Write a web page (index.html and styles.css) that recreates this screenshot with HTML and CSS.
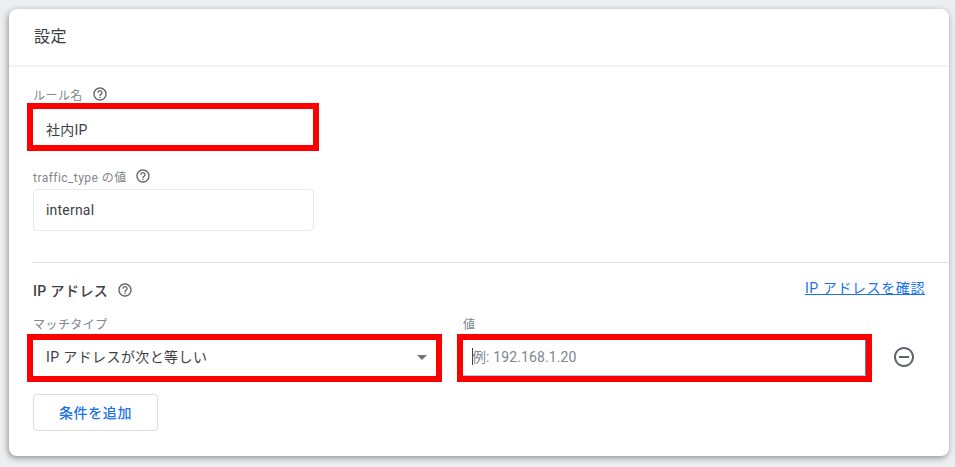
FILE: index.html
```html
<!DOCTYPE html>
<html lang="ja">
<head>
    <meta charset="UTF-8">
    <meta name="viewport" content="width=device-width, initial-scale=1.0">
    <title>設定</title>
    <link rel="stylesheet" href="styles.css">
</head>
<body>
    <div class="card">
        <div class="card-header">設定</div>

        <div class="section-top">
            <div class="label label-first">ルール名
                <svg class="help" viewBox="0 0 24 24"><path d="M11 18h2v-2h-2v2zm1-16C6.48 2 2 6.48 2 12s4.48 10 10 10 10-4.48 10-10S17.52 2 12 2zm0 18c-4.41 0-8-3.59-8-8s3.59-8 8-8 8 3.59 8 8-3.59 8-8 8zm0-14c-2.21 0-4 1.79-4 4h2c0-1.1.9-2 2-2s2 .9 2 2c0 2-3 1.75-3 5h2c0-2.25 3-2.5 3-5 0-2.21-1.79-4-4-4z"/></svg>
            </div>
            <div class="input input-name marked">社内IP</div>

            <div class="label label-second">traffic_type の値
                <svg class="help" viewBox="0 0 24 24"><path d="M11 18h2v-2h-2v2zm1-16C6.48 2 2 6.48 2 12s4.48 10 10 10 10-4.48 10-10S17.52 2 12 2zm0 18c-4.41 0-8-3.59-8-8s3.59-8 8-8 8 3.59 8 8-3.59 8-8 8zm0-14c-2.21 0-4 1.79-4 4h2c0-1.1.9-2 2-2s2 .9 2 2c0 2-3 1.75-3 5h2c0-2.25 3-2.5 3-5 0-2.21-1.79-4-4-4z"/></svg>
            </div>
            <div class="input input-type">internal</div>
        </div>

        <div class="section-ip">
            <div class="ip-title-row">
                <div class="ip-title">IP アドレス
                    <svg class="help" viewBox="0 0 24 24"><path d="M11 18h2v-2h-2v2zm1-16C6.48 2 2 6.48 2 12s4.48 10 10 10 10-4.48 10-10S17.52 2 12 2zm0 18c-4.41 0-8-3.59-8-8s3.59-8 8-8 8 3.59 8 8-3.59 8-8 8zm0-14c-2.21 0-4 1.79-4 4h2c0-1.1.9-2 2-2s2 .9 2 2c0 2-3 1.75-3 5h2c0-2.25 3-2.5 3-5 0-2.21-1.79-4-4-4z"/></svg>
                </div>
                <a href="#" class="link">IP アドレスを確認</a>
            </div>

            <div class="condition-row">
                <div class="field">
                    <div class="label">マッチタイプ</div>
                    <div class="input input-select marked">
                        IP アドレスが次と等しい
                        <span class="arrow"></span>
                    </div>
                </div>
                <div class="field">
                    <div class="label">値</div>
                    <div class="input input-value marked"><span class="caret"></span>例: 192.168.1.20</div>
                </div>
                <svg class="remove" viewBox="0 0 24 24"><path d="M7 11v2h10v-2H7zm5-9C6.48 2 2 6.48 2 12s4.48 10 10 10 10-4.48 10-10S17.52 2 12 2zm0 18c-4.41 0-8-3.59-8-8s3.59-8 8-8 8 3.59 8 8-3.59 8-8 8z"/></svg>
            </div>

            <button class="button">条件を追加</button>
        </div>
    </div>
</body>
</html>
```

FILE: styles.css
```css
* {
    box-sizing: border-box;
}
body {
    margin: 0;
    padding: 9px 6px 0 9px;
    height: 467px;
    overflow: hidden;
    background-color: #eceef1;
    font-family: Roboto, "Noto Sans CJK JP", sans-serif;
    color: #3c4043;
}
.card {
    width: 940px;
    height: 447px;
    background-color: #fff;
    border-radius: 8px;
    box-shadow: -1px 2px 6px rgba(0, 0, 0, 0.4);
}
.card-header {
    height: 58px;
    padding: 16px 25px 0;
    font-size: 16px;
    line-height: 24px;
    letter-spacing: 0.5px;
    border-bottom: 2px solid #f1f3f4;
}
.section-top {
    padding: 19px 24px 31px;
}
.label {
    display: flex;
    align-items: center;
    height: 16px;
    font-size: 12px;
    letter-spacing: 0.45px;
    color: #80868b;
    margin-bottom: 7px;
}
.label-first .help {
    margin-left: 9px;
}
.label-second {
    margin-top: 23px;
    margin-bottom: 5px;
}
.help {
    width: 16px;
    height: 16px;
    margin-left: 8px;
    fill: #5f6368;
}
.input {
    display: flex;
    align-items: center;
    font-size: 14px;
    line-height: 20px;
    letter-spacing: 0.2px;
    background-color: #fff;
}
.marked {
    height: 36px;
    padding: 6px 0 0 13px;
    outline: 6px solid #f00;
}
.input-name {
    width: 280px;
}
.input-type {
    width: 281px;
    height: 42px;
    padding: 0 12px;
    border: 1px solid #e8eaed;
    border-radius: 4px;
}
.section-ip {
    margin-left: 24px;
    padding-top: 17px;
    border-top: 1px solid #e0e0e0;
}
.ip-title-row {
    display: flex;
    justify-content: space-between;
    height: 20px;
    padding-right: 24px;
    margin-bottom: 15px;
}
.ip-title {
    display: flex;
    align-items: center;
    font-size: 14px;
    font-weight: 500;
    letter-spacing: 0.4px;
    color: #3c4043;
}
.ip-title .help {
    margin-left: 9px;
}
.link {
    font-size: 14px;
    line-height: 16px;
    letter-spacing: 0.6px;
    color: #1a73e8;
    text-decoration: underline;
}
.condition-row {
    display: flex;
    gap: 27px;
}
.field {
    width: 403px;
}
.field .label {
    margin-bottom: 9px;
}
.input-select {
    position: relative;
    padding: 0 0 2px 13px;
    letter-spacing: 0.4px;
}
.arrow {
    position: absolute;
    right: 9px;
    top: 15px;
    border-left: 5px solid transparent;
    border-right: 5px solid transparent;
    border-top: 5px solid #757575;
}
.input-value {
    padding: 0 0 2px 9px;
    letter-spacing: 0.12px;
    color: #80868b;
    border-right: 1px solid #4285f4;
    border-bottom: 1px solid #a8c7fa;
}
.caret {
    width: 1px;
    height: 17px;
    margin-right: -1px;
    background-color: #3c4043;
}
.remove {
    width: 24px;
    height: 24px;
    margin: 30px 0 0 -1px;
    fill: #5f6368;
}
.button {
    display: block;
    width: 125px;
    height: 37px;
    margin-top: 18px;
    padding: 0 0 2px;
    background-color: #fff;
    border: 1px solid #dadce0;
    border-radius: 4px;
    color: #1a73e8;
    font-family: inherit;
    font-size: 14px;
    font-weight: 500;
    letter-spacing: 0.6px;
}
```
